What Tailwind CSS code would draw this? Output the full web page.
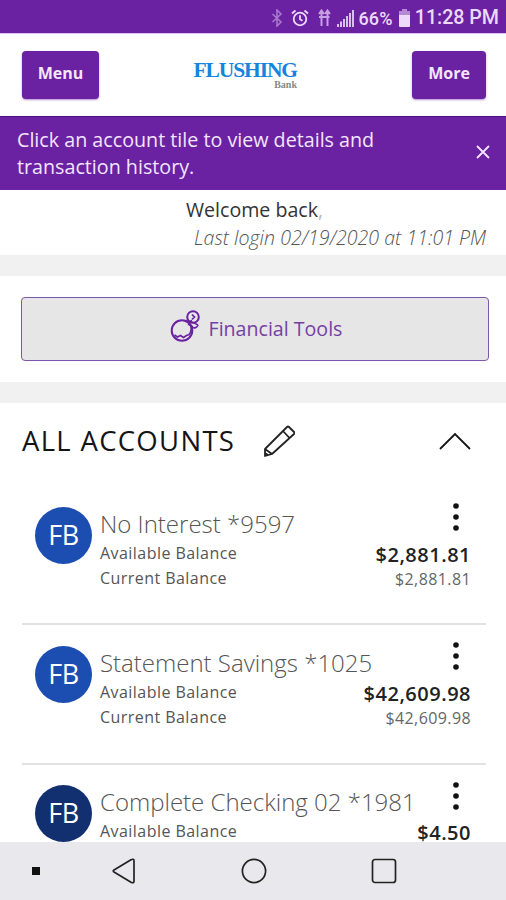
<!DOCTYPE html>
<html lang="en">
<head>
    <meta charset="UTF-8">
    <meta name="viewport" content="width=device-width, initial-scale=1.0">
    <title>Flushing Bank - Accounts</title>

    <!-- Tailwind CSS -->
    <script src="https://cdn.jsdelivr.net/npm/@tailwindcss/browser@4"></script>
</head>

<body class="bg-white font-['Open_Sans',sans-serif]">
    <div class="w-[506px] h-[900px] flex flex-col overflow-hidden whitespace-nowrap">
        <!-- STATUS BAR -->
        <div class="h-[34px] shrink-0 bg-[#6a21a2] border-b border-[#dcc0f5] flex items-center justify-end pt-[3px] pr-[7px] text-[#ecd9fb] font-['Roboto',sans-serif] font-medium">
            <svg class="mr-[8px] text-[#a77acb]" width="12" height="18" viewBox="0 0 12 18" fill="none" stroke="currentColor" stroke-width="1.6"><path d="M1.5 5l8.500 8-4 4V1l4 4-8.500 8"/></svg>
            <svg class="mr-[9px]" width="18" height="18" viewBox="0 0 18 18" fill="none" stroke="currentColor" stroke-width="1.8"><circle cx="9" cy="10" r="6.3"/><path d="M9 6.300v4l2.500 1.500M1 4.500L4.500 1.500M17 4.500L13.500 1.500"/></svg>
            <svg class="mr-[6px] text-[#c5a0e2]" width="13" height="18" viewBox="0 0 13 18" fill="none" stroke="currentColor" stroke-width="2"><path d="M3.500 17V2M9.500 17V2M1 5l2.500-3.500L6 5M7 5l2.500-3.500L12 5M1 8h10.500"/></svg>
            <svg class="mr-1" width="17" height="18" viewBox="0 0 17 18" fill="currentColor"><path d="M0 15h2v3H0zM3 12.500h2V18H3zM6 10h2v8H6zM9 7h2v11H9zM12 4h2v14h-2zM15 1h2v17h-2z" opacity=".85"/></svg>
            <span class="text-[18px] tracking-[0.2px] mr-[6px]">66%</span>
            <svg class="mr-[5px]" width="11" height="18" viewBox="0 0 11 18" fill="currentColor"><path d="M3 0h5v2h2q1 0 1 1v14q0 1-1 1H1q-1 0-1-1V3q0-1 1-1h2z"/><path d="M3 0h5v2h3v4H0V2h3z" fill="#b48ad3"/></svg>
            <span class="text-[19.6px]">11:28 PM</span>
        </div>

        <!-- HEADER -->
        <header class="h-[82px] shrink-0 flex items-start pt-[17px] pl-[22px] pr-5">
            <button class="w-[77px] h-12 pb-1 rounded bg-[#6a21a2] shadow-[0_1px_2px_#6a21a280] text-[#f3e6fd] text-base font-bold">Menu</button>
            <div class="w-[103px] mt-[10px] ml-[95px] flex flex-col items-end font-['Liberation_Serif',serif] font-bold">
                <span class="text-[21.5px] leading-[19px] tracking-[-1.1px] text-[#1484dc]">FLUSHING</span>
                <span class="text-[10px] leading-[9px] text-[#888]">Bank</span>
            </div>
            <button class="ml-auto w-[74px] h-12 pb-1 rounded bg-[#6a21a2] shadow-[0_1px_2px_#6a21a280] text-[#f3e6fd] text-base font-bold">More</button>
        </header>

        <!-- BANNER -->
        <div class="h-[74px] shrink-0 bg-[#6a21a2] border-t border-[#4b1280] flex items-center justify-between pb-px pl-[17px] pr-4 text-[#f3e6fd]">
            <p class="text-[19.7px] leading-[27px]">Click an account tile to view details and<br>transaction history.</p>
            <svg class="-mt-0.5" width="14" height="14" viewBox="0 0 14 14" fill="none" stroke="currentColor" stroke-width="1.8"><path d="M1 1l12 12M13 1L1 13"/></svg>
        </div>

        <!-- WELCOME -->
        <div class="h-[65px] shrink-0 pt-[6px] pl-[186px] text-[19.6px] leading-7">
            <p class="text-[#333]">Welcome back<span class="text-[#bbb]">,</span></p>
            <p class="ml-2 italic font-light text-[#555]">Last login 02/19/2020 at 11:01 PM</p>
        </div>

        <!-- FINANCIAL TOOLS -->
        <div class="h-[148px] shrink-0 border-y-[21px] border-[#f1f1f1] pt-[21px] pl-[21px] pr-[17px]">
            <button class="w-full h-[64px] flex items-center justify-center pl-[2px] rounded border border-[#7d58a8] bg-[#e6e6e6] text-[#7440a4] text-[19.6px]">
                <svg class="mr-[9px] -mt-1.5" width="30" height="32" viewBox="0 0 30 32" fill="none" stroke="#6a21a2" stroke-width="2"><circle cx="12" cy="20.500" r="10.300"/><path d="M4.500 25l3 2 3-1.500 3 2 3-2 3-1M20 14q3 6-1 10.500" stroke-width="1.6"/><circle cx="23" cy="7" r="5.800"/><path d="M22 4.500l2.500 2.500-2.500 2.500M15 11.500c4-1 7 0 13 3.500M28 15c-1 3-3 3.500-7 2M18 14l5 3M17 12.500l5-2" stroke-width="1.700"/></svg>
                <span>Financial Tools</span>
            </button>
        </div>

        <!-- ACCOUNTS -->
        <main class="h-[439px] shrink-0 overflow-hidden pl-[22px] pr-5">
            <div class="h-[82px] flex items-start pt-[22px] pr-[15px]">
                <h1 class="text-[27.5px] leading-[32px] tracking-[1.3px] text-[#151515]">ALL ACCOUNTS</h1>
                <svg class="ml-[28px]" width="32" height="32" viewBox="0 0 32 32" fill="none" stroke="#222" stroke-width="1.8" stroke-linejoin="round"><path d="M2 31V24L24 2q1-1 2 0l5 5q1 1 0 2L9 29zM2 24l7 5M20 6l6.500 7M2 28l3 2"/></svg>
                <svg class="ml-auto mt-[7px]" width="32" height="18" viewBox="0 0 32 18" fill="none" stroke="#151515" stroke-width="1.8"><path d="M1 17L16 2l15 15"/></svg>
            </div>

            <section class="h-[140px] border-b-2 border-[#e2e2e2] flex pt-[21px] pl-[13px] pr-[15px]">
                <div class="size-[57px] mt-px shrink-0 rounded-full bg-[#1c4eb2] flex items-center justify-center text-white text-[27px] tracking-[-0.5px]">FB</div>
                <div class="ml-[8px] mt-px flex-1 min-w-0">
                    <h2 class="text-2xl leading-[34px] font-light text-[#555]">No Interest *9597</h2>
                    <p class="text-base leading-[25px] tracking-[0.45px] text-[#555]">Available Balance</p>
                    <p class="text-base leading-[25px] tracking-[0.45px] text-[#555]">Current Balance</p>
                </div>
                <div class="-mt-[4px] flex flex-col items-end">
                    <svg class="mr-3" width="6" height="30" viewBox="0 0 6 30" fill="#111"><circle cx="3" cy="4" r="2.8"/><circle cx="3" cy="15" r="2.8"/><circle cx="3" cy="26" r="2.8"/></svg>
                    <p class="mt-[10px] text-xl leading-[26px] font-semibold tracking-[0.5px] text-[#222]">$2,881.81</p>
                    <p class="text-base leading-[23px] tracking-[0.4px] text-[#666]">$2,881.81</p>
                </div>
            </section>

            <section class="h-[140px] border-b-2 border-[#e2e2e2] flex pt-[20px] pl-[13px] pr-[15px]">
                <div class="size-[57px] mt-px shrink-0 rounded-full bg-[#1c4eb2] flex items-center justify-center text-white text-[27px] tracking-[-0.5px]">FB</div>
                <div class="ml-[8px] mt-px flex-1 min-w-0">
                    <h2 class="text-2xl leading-[34px] font-light text-[#555]">Statement Savings *1025</h2>
                    <p class="text-base leading-[25px] tracking-[0.45px] text-[#555]">Available Balance</p>
                    <p class="text-base leading-[25px] tracking-[0.45px] text-[#555]">Current Balance</p>
                </div>
                <div class="-mt-[4px] flex flex-col items-end">
                    <svg class="mr-3" width="6" height="30" viewBox="0 0 6 30" fill="#111"><circle cx="3" cy="4" r="2.8"/><circle cx="3" cy="15" r="2.8"/><circle cx="3" cy="26" r="2.8"/></svg>
                    <p class="mt-[10px] text-xl leading-[26px] font-semibold tracking-[0.5px] text-[#222]">$42,609.98</p>
                    <p class="text-base leading-[23px] tracking-[0.4px] text-[#666]">$42,609.98</p>
                </div>
            </section>

            <section class="h-[140px] flex pt-[20px] pl-[13px] pr-[15px]">
                <div class="size-[57px] shrink-0 rounded-full bg-[#122f70] flex items-center justify-center text-white text-[27px] tracking-[-0.5px]">FB</div>
                <div class="ml-[8px] flex-1 min-w-0">
                    <h2 class="text-2xl leading-[34px] font-light text-[#555]">Complete Checking 02 *1981</h2>
                    <p class="text-base leading-[25px] tracking-[0.45px] text-[#555]">Available Balance</p>
                </div>
                <div class="-mt-[4px] flex flex-col items-end">
                    <svg class="mr-3" width="6" height="30" viewBox="0 0 6 30" fill="#111"><circle cx="3" cy="4" r="2.8"/><circle cx="3" cy="15" r="2.8"/><circle cx="3" cy="26" r="2.8"/></svg>
                    <p class="mt-[9px] text-xl leading-[26px] font-semibold tracking-[0.5px] text-[#222]">$4.50</p>
                </div>
            </section>
        </main>

        <!-- NAVIGATION BAR -->
        <nav class="h-[58px] shrink-0 bg-[#e9e9ed] flex items-center pl-8 text-[#222]">
            <div class="size-2 bg-[#111]"></div>
            <svg class="ml-[72px]" width="24" height="26" viewBox="0 0 24 26" fill="none" stroke="currentColor" stroke-width="1.7" stroke-linejoin="round"><path d="M2 12L19 1.800q3-1.500 3 1v20.400q0 2.500-3 1L2 14q-1.500-1 0-2z"/></svg>
            <svg class="ml-[105px]" width="26" height="26" viewBox="0 0 26 26" fill="none" stroke="currentColor" stroke-width="1.7"><circle cx="13" cy="13" r="11.600"/></svg>
            <svg class="ml-[104px]" width="26" height="26" viewBox="0 0 26 26" fill="none" stroke="currentColor" stroke-width="1.7"><rect x="1.500" y="1.500" width="23" height="23" rx="2.500"/></svg>
        </nav>
    </div>
</body>
</html>
